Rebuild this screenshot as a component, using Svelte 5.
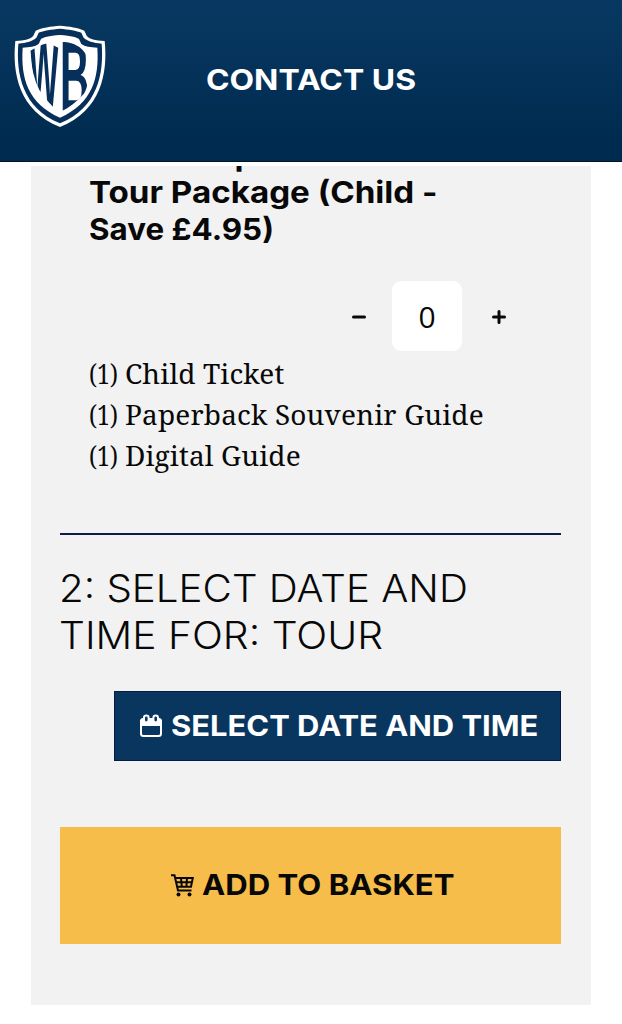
<script>
    let quantity = $state(0);

    const contents = [
        { count: 1, name: 'Child Ticket' },
        { count: 1, name: 'Paperback Souvenir Guide' },
        { count: 1, name: 'Digital Guide' }
    ];
</script>

<div class="page">
    <header>
        <svg class="logo" viewBox="0 0 360 390" role="img" aria-label="WB">
            <defs>
                <clipPath id="shield">
                    <path d="M90 123Q125 98 172 95H188Q225 96 248 120Q270 145 264 168Q268 240 245 258Q220 286 188 302H172Q145 280 118 240Q95 195 90 123Z" />
                </clipPath>
            </defs>
            <path fill="#fff" d="M180 47C152 49 125 53 107 62L100 77C92 87 75 91 46 93C36 190 57 302 180 351C303 302 324 190 314 93C285 91 268 87 260 77L253 62C235 53 208 49 180 47Z" />
            <path fill="#06305b" d="M180 56C155 58 130 62 116 68L110 82C100 94 80 99 55 101C48 190 66 293 180 340C294 293 312 190 305 101C280 99 260 94 250 82L244 68C230 62 205 58 180 56Z" />
            <path fill="#fff" d="M180 75C146 77 128 83 123 87L116 102C105 110 89 112 68 113C62 204 83 280 180 323C277 280 298 204 292 113C271 112 255 110 244 102L237 87C232 83 214 77 180 75Z" />
            <g clip-path="url(#shield)" fill="#06305b">
                <text class="mono" transform="translate(87 258) skewY(27) scale(.93 2.75)" x="0" y="0">W</text>
                <text class="mono" transform="translate(180 302) scale(1.22 3)" x="0" y="0">B</text>
            </g>
        </svg>
        <span class="contact">CONTACT US</span>
    </header>

    <main>
        <section class="package">
            <h3>
                <span class="line first">The Complete Studio</span>
                <span class="line second">Tour Package (Child -</span>
                <span class="line third">Save £4.95)</span>
            </h3>
            <div class="stepper">
                <button aria-label="Remove one" onclick={() => (quantity = Math.max(0, quantity - 1))}>
                    <svg viewBox="0 0 16 16"><path d="M2.5 8H13.5" /></svg>
                </button>
                <output>{quantity}</output>
                <button class="plus" aria-label="Add one" onclick={() => (quantity += 1)}>
                    <svg viewBox="0 0 16 16"><path d="M2.5 8H13.5M8 2.5V13.5" /></svg>
                </button>
            </div>
            <ul>
                {#each contents as item}
                    <li><span class="count">({item.count})</span><span>{item.name}</span></li>
                {/each}
            </ul>
        </section>

        <h2>
            <span class="line step">2: SELECT DATE AND</span>
            <span class="line tour">TIME FOR: TOUR</span>
        </h2>

        <button class="date">
            <svg viewBox="0 0 24 24">
                <path d="M2 10V8Q2 5 5 5H19Q22 5 22 8V11H2Z" fill="#fff" />
                <rect x="2" y="5" width="20" height="17" rx="2.5" />
                <rect class="ring" x="5" y="1.4" width="4.6" height="7" rx="2.3" />
                <rect class="ring" x="14.4" y="1.4" width="4.6" height="7" rx="2.3" />
            </svg>
            <span>SELECT DATE AND TIME</span>
        </button>

        <button class="basket">
            <svg viewBox="0 0 24 24">
                <path d="M1 2.2H4.5L8 17.5H21.5M5.2 5H22.8L21 13.8H7.2M6.2 9.3H21.8M11 5L11.8 13.8M17 5L16.4 13.8" />
                <circle cx="8.5" cy="21.5" r="2" />
                <circle cx="19.5" cy="21.5" r="2" />
            </svg>
            <span>ADD TO BASKET</span>
        </button>
    </main>
</div>

<style>
    :global(body) {
        margin: 0;
        background: #fff;
    }

    .page {
        width: 622px;
        height: 1024px;
        overflow: hidden;
        color: #080808;
        font-family: Inter, "Open Sans", sans-serif;
    }

    header {
        box-sizing: border-box;
        height: 162px;
        display: grid;
        grid-template-columns: 120px 382px 120px;
        align-items: start;
        padding-top: 10px;
        background: linear-gradient(#083862, #002b50 88%);
        border-bottom: 1px solid #061524;
    }

    .logo {
        width: 120px;
        height: 130px;
    }

    .mono {
        font-family: "Liberation Sans", sans-serif;
        font-size: 100px;
        font-weight: bold;
    }

    .contact {
        padding-top: 49px;
        color: #fff;
        font-size: 29px;
        line-height: 42px;
        font-weight: 700;
        text-align: center;
        transform: scaleX(1.1);
    }

    main {
        box-sizing: border-box;
        width: 560px;
        height: 839px;
        margin: 4px 0 0 31px;
        padding: 0 30px 0 29px;
        overflow: hidden;
        background: #f2f2f2;
        display: flex;
        flex-direction: column;
    }

    .package {
        height: 367px;
        flex: none;
        padding: 0 30px 0 29px;
        border-bottom: 2px solid #101b4b;
    }

    h3 {
        margin: -29px 0 0;
        font-size: 30px;
        line-height: 37px;
        font-weight: 700;
    }

    /* the headings are set slightly wide */
    .line {
        display: block;
        white-space: nowrap;
        transform-origin: left;
    }

    .first {
        transform: scaleX(1.105);
    }

    .second {
        transform: scaleX(1.105);
    }

    .third {
        transform: scaleX(1.045);
    }

    .stepper {
        display: flex;
        align-items: center;
        gap: 21px;
        height: 70px;
        margin: 33px 0 0 258px;
    }

    button {
        font: inherit;
        border: 0;
        padding: 0;
        background: none;
        cursor: pointer;
    }

    .stepper button {
        width: 24px;
        height: 24px;
        padding-top: 2px;
        display: grid;
        place-items: center;
    }

    .stepper .plus {
        margin-left: 4px;
    }

    .stepper svg {
        width: 16px;
        height: 16px;
        fill: none;
        stroke: #080808;
        stroke-width: 3;
        stroke-linecap: round;
    }

    output {
        width: 70px;
        height: 70px;
        border-radius: 9px;
        background: #fff;
        font-family: "Open Sans", sans-serif;
        font-size: 30px;
        line-height: 71px;
        text-align: center;
    }

    ul {
        list-style: none;
        margin: 2px 0 0;
        padding: 0;
        font-family: "Noto Serif", "Liberation Serif", serif;
        font-size: 28px;
        line-height: 41px;
        letter-spacing: 0.15px;
    }

    li {
        display: flex;
    }

    .count {
        width: 36px;
        transform: scaleX(0.82);
        transform-origin: left;
    }

    h2 {
        margin: 30px 0 0 -1px;
        font-size: 38px;
        line-height: 47px;
        font-weight: 300;
    }

    .step {
        transform: scaleX(1.06);
    }

    .tour {
        transform: scaleX(1.072);
    }

    .date,
    .basket {
        display: flex;
        flex: none;
        align-items: center;
        justify-content: center;
        gap: 8px;
        font-size: 29px;
        font-weight: 700;
        white-space: nowrap;
    }

    .date span,
    .basket span {
        text-align: left;
        transform-origin: left;
    }

    .date {
        align-self: flex-end;
        width: 447px;
        height: 70px;
        margin-top: 32px;
        padding-bottom: 2px;
        border: 1px solid #071a43;
        background: #09365f;
        color: #fff;
    }

    .date span {
        width: 366px;
        transform: scaleX(1.066);
    }

    .date svg {
        width: 24px;
        height: 24px;
        margin-top: 2px;
        fill: none;
        stroke: #fff;
        stroke-width: 2;
    }

    .date .ring {
        fill: #09365f;
    }

    .basket {
        height: 117px;
        margin-top: 66px;
        padding: 0 0 2px 1px;
        background: #f6bd4b;
        color: #080808;
    }

    .basket span {
        width: 251px;
        transform: scaleX(1.073);
    }

    .basket svg {
        width: 24px;
        height: 24px;
        margin-top: 1px;
        fill: none;
        stroke: #080808;
        stroke-width: 2;
    }

    .basket circle {
        fill: #080808;
        stroke: none;
    }
</style>
